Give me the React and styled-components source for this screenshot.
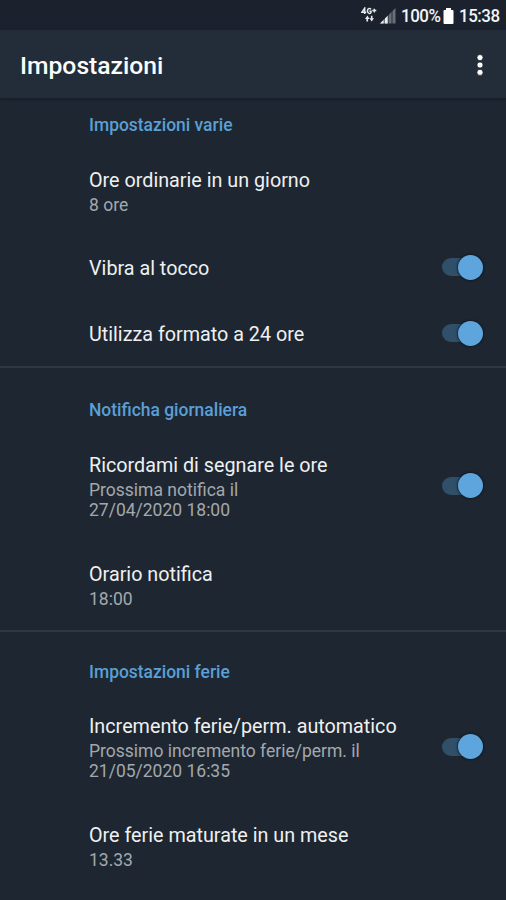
import React, { useState } from "react";
import styled, { createGlobalStyle } from "styled-components";

const GlobalStyle = createGlobalStyle`
  * { box-sizing: border-box; }
  body {
    margin: 0;
    background: #1e2731;
    font-family: Roboto, sans-serif;
    overflow: hidden;
  }
`;

const Screen = styled.div`
  display: flex;
  flex-direction: column;
  width: 100%;
  height: 900px;
  overflow: hidden;
  background: #1e2731;
`;

const StatusBar = styled.div`
  display: flex;
  align-items: center;
  justify-content: flex-end;
  flex: none;
  height: 30px;
  padding: 1px 6px 0 0;
  background: #1b222d;
  color: #f2f4f5;
  font-size: 18px;
  line-height: 28px;
`;

const StatusText = styled.span`
  width: ${(p) => p.$width}px;
  font-weight: 500;
  letter-spacing: -0.5px;
  white-space: nowrap;
  transform: scaleX(${(p) => p.$condense});
  transform-origin: left center;
`;

const AppBar = styled.header`
  display: flex;
  align-items: center;
  justify-content: space-between;
  flex: none;
  height: 69px;
  padding: 1px 20px 0;
  background: #222d39;
  border-bottom: 1px solid #18212b;
  box-shadow: 0 1px 2px rgba(10, 16, 24, 0.35);
`;

const Title = styled.h1`
  margin: 2px 0 0;
  color: #fcfdfd;
  font-size: 24.7px;
  font-weight: 500;
  line-height: 32px;
`;

const MenuButton = styled.button`
  display: flex;
  padding: 0;
  border: 0;
  background: none;
  color: #ffffff;
`;

const Section = styled.section`
  display: flex;
  flex-direction: column;
  flex: none;
  & + & {
    border-top: 2px solid #2e3843;
  }
`;

const Heading = styled.h2`
  margin: 0;
  height: ${(p) => p.$height}px;
  padding: ${(p) => p.$top}px 0 0 89px;
  color: #5a9fd6;
  font-size: 17.45px;
  font-weight: 500;
  line-height: 24px;
`;

const Row = styled.div`
  display: flex;
  align-items: center;
  justify-content: space-between;
  height: ${(p) => p.$height}px;
  padding: 0 23px 0 89px;
`;

const TextBlock = styled.div`
  padding-top: ${(p) => (p.$single ? 4 : 1)}px;
`;

const Label = styled.div`
  color: #eef0f1;
  font-size: 19.75px;
  line-height: 28px;
  white-space: nowrap;
`;

const Summary = styled.div`
  color: #a3a8ad;
  font-size: 17.5px;
  line-height: 20px;
  white-space: pre-line;
`;

const SwitchButton = styled.button`
  display: flex;
  align-items: center;
  flex: none;
  width: 41px;
  height: 26px;
  padding: 0;
  border: 0;
  background: none;
`;

const Rail = styled.span`
  display: flex;
  align-items: center;
  justify-content: ${(p) => (p.$on ? "flex-end" : "flex-start")};
  width: 38px;
  height: 18px;
  border-radius: 9px;
  background: #304f69;
`;

const Thumb = styled.span`
  flex: none;
  width: 25px;
  height: 25px;
  margin: 0 -3px;
  border-radius: 50%;
  background: #5ea5de;
  box-shadow: 0 0 2px 1px rgba(13, 20, 29, 0.65);
`;

function Switch() {
  const [on, setOn] = useState(true);
  return (
    <SwitchButton role="switch" aria-checked={on} onClick={() => setOn(!on)}>
      <Rail $on={on}>
        <Thumb />
      </Rail>
    </SwitchButton>
  );
}

function Setting({ height, label, summary, toggle }) {
  return (
    <Row $height={height}>
      <TextBlock $single={!summary}>
        <Label>{label}</Label>
        {summary && <Summary>{summary}</Summary>}
      </TextBlock>
      {toggle && <Switch />}
    </Row>
  );
}

const NetworkIcon = () => (
  <svg width="16" height="17" viewBox="0 0 16 17" fill="none" stroke="#e6e9eb">
    <path d="M3.7 7V1.2L1 5.2h4.3M10 2.4Q9.2 1.3 8 1.5 6.4 1.8 6.5 4T8.2 6.5q1.2 0 1.8-.9V4.2H8.4M11.3 3.6h4M13.3 1.7v3.8" strokeWidth="1.5" />
    <path d="M4 12l2.4-3.4L8.6 12H7.1v2.5H5.4V12zM8.4 11.3h1.5V8.8h1.6v2.5H13l-2.3 3.2z" fill="#e6e9eb" stroke="none" />
  </svg>
);

const SignalIcon = () => (
  <svg width="16" height="16" viewBox="0 0 16 16">
    <path d="M15.5 0v15.5H0z" fill="#66707a" />
    <path d="M8 7.5v8H0z" fill="#eef0f2" />
    <path d="M4.2 10v6M8.2 6v10M12 2v14" stroke="#1b222d" strokeWidth=".8" />
  </svg>
);

const BatteryIcon = () => (
  <svg width="11" height="16" viewBox="0 0 11 16">
    <path d="M3 0h5v2h1.5a1 1 0 0 1 1 1v12a1 1 0 0 1-1 1h-8a1 1 0 0 1-1-1V3a1 1 0 0 1 1-1H3z" fill="#fff" />
  </svg>
);

const SignalGroup = styled.div`
  display: flex;
  align-items: center;
  gap: 3px;
  margin-right: 5px;
`;

const BatterySlot = styled.span`
  display: flex;
  margin: 0 5px 0 4px;
`;

const sections = [
  {
    title: "Impostazioni varie",
    height: 48,
    top: 14,
    rows: [
      { label: "Ore ordinarie in un giorno", summary: "8 ore", height: 87 },
      { label: "Vibra al tocco", toggle: true, height: 66 },
      { label: "Utilizza formato a 24 ore", toggle: true, height: 66 },
    ],
  },
  {
    title: "Notificha giornaliera",
    height: 65,
    top: 30,
    rows: [
      { label: "Ricordami di segnare le ore", summary: "Prossima notifica il\n27/04/2020 18:00", toggle: true, height: 105 },
      { label: "Orario notifica", summary: "18:00", height: 92 },
    ],
  },
  {
    title: "Impostazioni ferie",
    height: 62,
    top: 28,
    rows: [
      { label: "Incremento ferie/perm. automatico", summary: "Prossimo incremento ferie/perm. il\n21/05/2020 16:35", toggle: true, height: 105 },
      { label: "Ore ferie maturate in un mese", summary: "13.33", height: 93 },
    ],
  },
];

export default function App() {
  return (
    <>
      <GlobalStyle />
      <Screen>
        <StatusBar>
          <SignalGroup>
            <NetworkIcon />
            <SignalIcon />
          </SignalGroup>
          <StatusText $width={38} $condense={0.94}>100%</StatusText>
          <BatterySlot>
            <BatteryIcon />
          </BatterySlot>
          <StatusText $width={41} $condense={0.94}>15:38</StatusText>
        </StatusBar>
        <AppBar>
          <Title>Impostazioni</Title>
          <MenuButton aria-label="Menu">
            <svg width="12" height="24" viewBox="0 0 12 24" fill="currentColor" stroke="#141c26" strokeWidth=".8">
              <circle cx="6" cy="4.6" r="3.1" />
              <circle cx="6" cy="12" r="3.1" />
              <circle cx="6" cy="19.4" r="3.1" />
            </svg>
          </MenuButton>
        </AppBar>
        {sections.map((s) => (
          <Section key={s.title}>
            <Heading $height={s.height} $top={s.top}>{s.title}</Heading>
            {s.rows.map((r) => (
              <Setting key={r.label} {...r} />
            ))}
          </Section>
        ))}
      </Screen>
    </>
  );
}
